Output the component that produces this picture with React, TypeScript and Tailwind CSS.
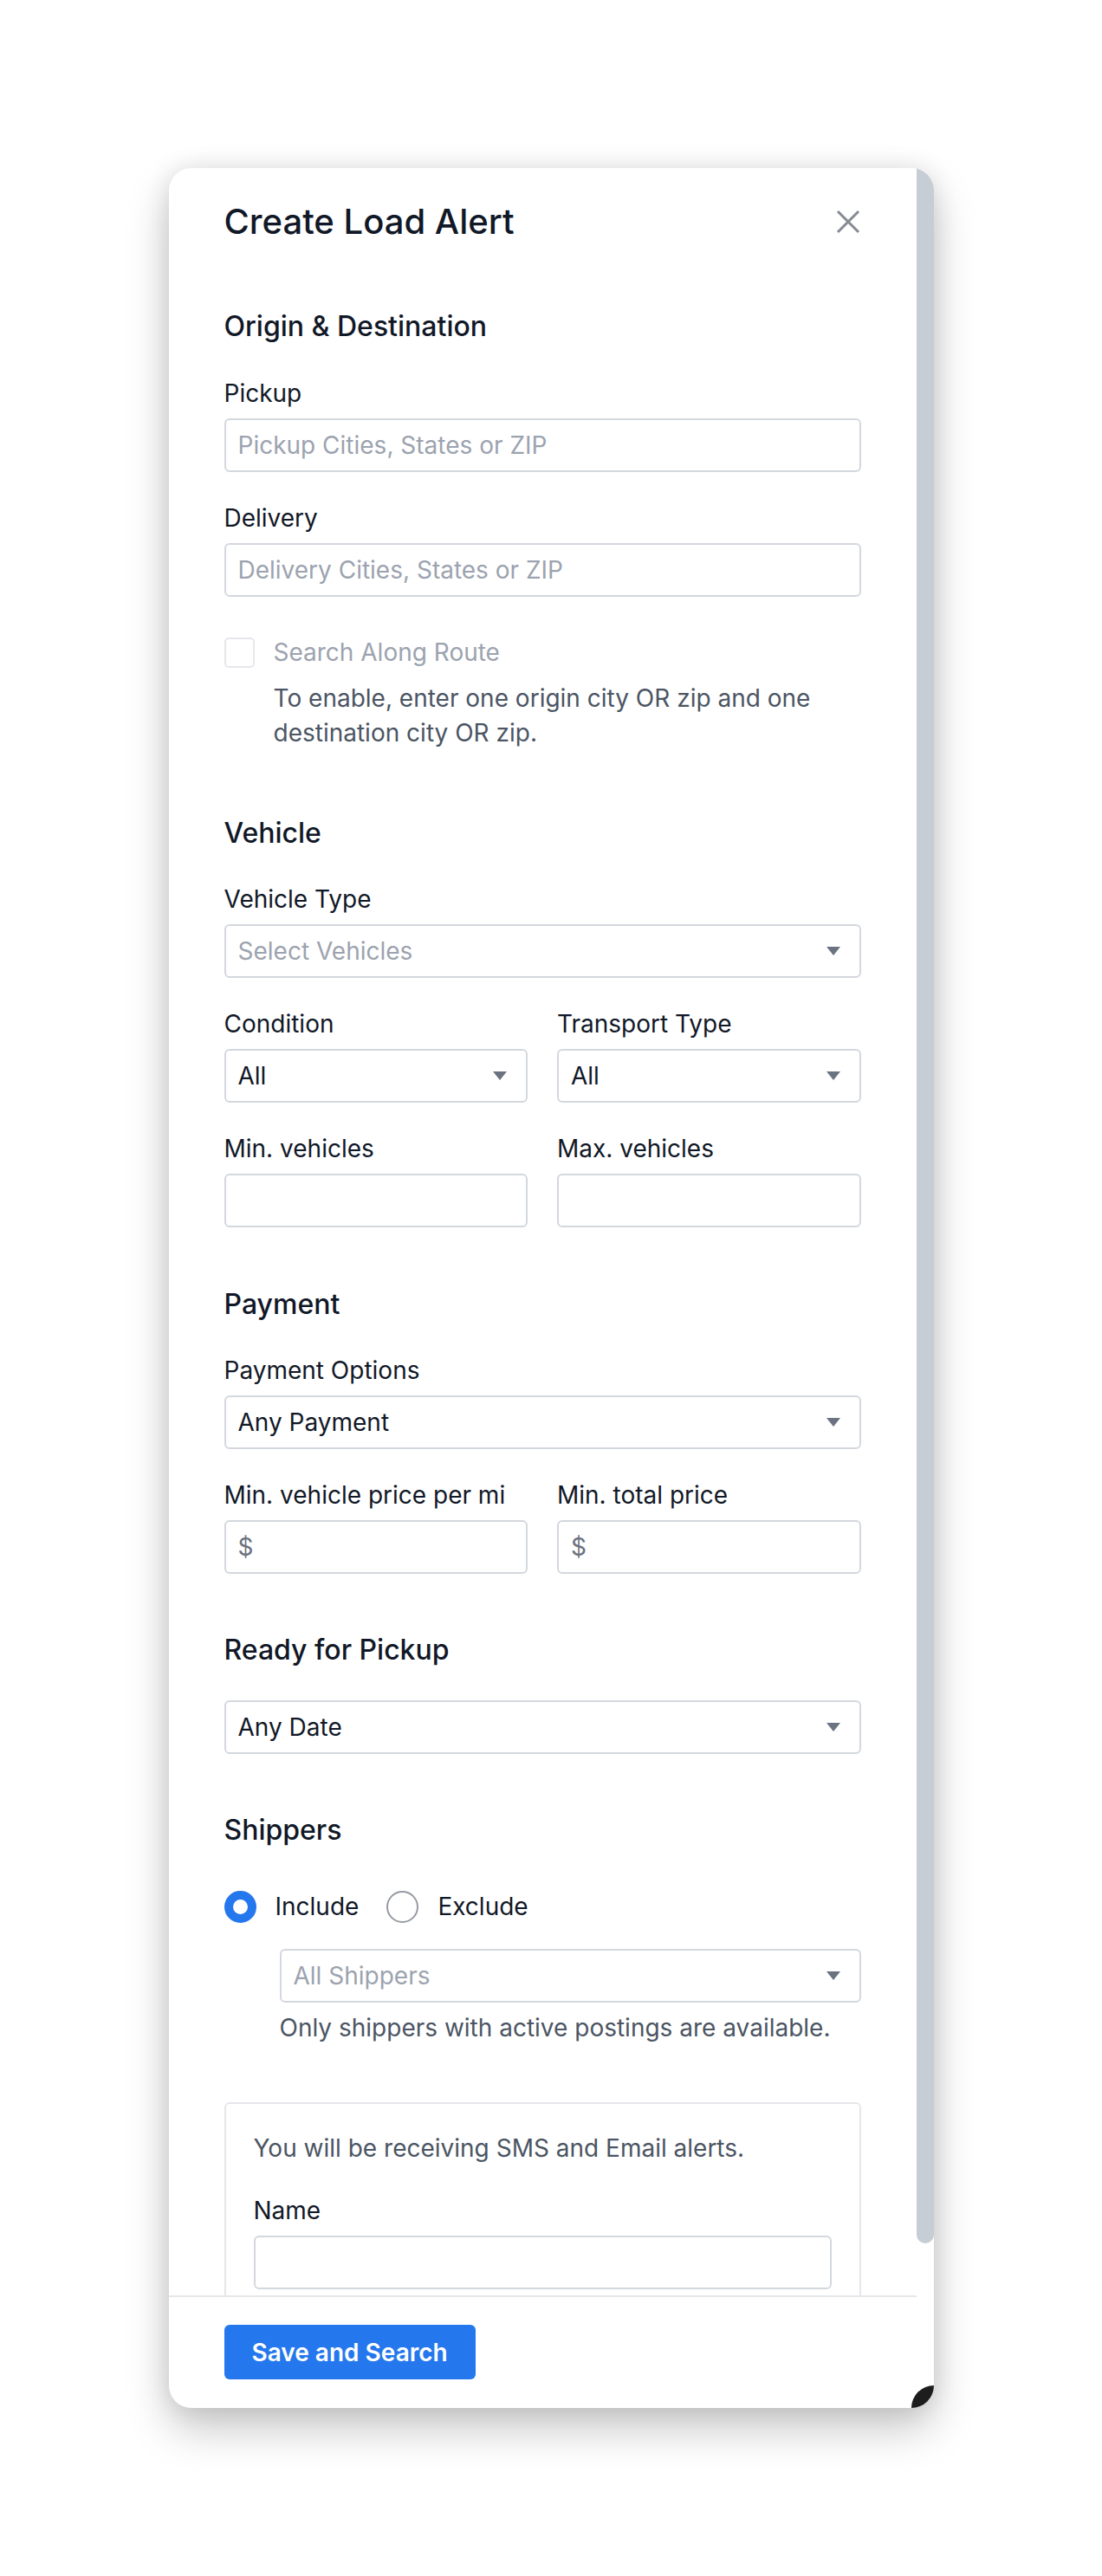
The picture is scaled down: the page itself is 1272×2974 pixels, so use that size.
import React from "react";

const Caret = () => (
  <svg width="16" height="10" viewBox="0 0 16 10" className="shrink-0">
    <path d="M0 0 H16 L8 10 Z" fill="#6b7280" />
  </svg>
);

const Label = ({ children, className = "" }: { children: React.ReactNode; className?: string }) => (
  <div className={`text-[28px] leading-[38px] text-[#111827] whitespace-nowrap ${className}`}>{children}</div>
);

const Heading = ({ children, className = "" }: { children: React.ReactNode; className?: string }) => (
  <div className={`text-[32px] leading-[44px] font-medium text-[#111827] ${className}`}>{children}</div>
);

const Select = ({
  value,
  placeholder = false,
  className = "",
}: {
  value: string;
  placeholder?: boolean;
  className?: string;
}) => (
  <div
    className={`h-[62px] flex items-center justify-between border-2 border-[#d3d7de] rounded-[6px] pl-[14px] pr-[22px] bg-white ${className}`}
  >
    <span className={`text-[28px] leading-[38px] ${placeholder ? "text-[#9ca3af]" : "text-[#111827]"}`}>
      {value}
    </span>
    <Caret />
  </div>
);

const Input = ({ placeholder = "", prefix = "", className = "" }: { placeholder?: string; prefix?: string; className?: string }) => (
  <div
    className={`h-[62px] flex items-center border-2 border-[#d3d7de] rounded-[6px] pl-[14px] pr-[14px] bg-white ${className}`}
  >
    {prefix ? <span className="text-[28px] leading-[38px] text-[#6b7280]">{prefix}</span> : null}
    {placeholder ? <span className="text-[28px] leading-[38px] text-[#9ca3af]">{placeholder}</span> : null}
  </div>
);

export default function App() {
  return (
    <div className="w-full h-[2974px] bg-white flex items-center justify-center font-['Inter',sans-serif]">
      <div className="relative w-[883px] h-[2586px] bg-white rounded-[26px] overflow-hidden flex shadow-[0_24px_50px_rgba(0,0,0,0.22),0_0_28px_rgba(0,0,0,0.10)]">
        {/* main column */}
        <div className="w-[863px] flex flex-col">
          <div className="flex-1 overflow-hidden">
            <div className="px-[64px] pt-[34px]">
              <div className="h-[56px] flex items-center justify-between">
                <div className="text-[40px] leading-[56px] font-medium text-[#111827]">Create Load Alert</div>
                <svg width="28" height="28" viewBox="0 0 28 28" className="mr-[1px]">
                  <path d="M2 2 L26 26 M26 2 L2 26" stroke="#868b93" strokeWidth="3" />
                </svg>
              </div>

              {/* Origin & Destination */}
              <Heading className="mt-[71px]">Origin &amp; Destination</Heading>
              <Label className="mt-[36px]">Pickup</Label>
              <Input className="mt-[10px]" placeholder="Pickup Cities, States or ZIP" />
              <Label className="mt-[34px]">Delivery</Label>
              <Input className="mt-[10px]" placeholder="Delivery Cities, States or ZIP" />

              <div className="mt-[47px] h-[35px] flex items-center">
                <div className="w-[35px] h-[35px] border-2 border-[#e5e7eb] rounded-[5px] shrink-0" />
                <span className="ml-[22px] text-[28px] leading-[35px] text-[#9ca3af]">Search Along Route</span>
              </div>
              <div className="mt-[15px] pl-[57px] text-[28px] leading-[40px] text-[#4b5563] whitespace-nowrap">
                To enable, enter one origin city OR zip and one
                <br />
                destination city OR zip.
              </div>

              {/* Vehicle */}
              <Heading className="mt-[74px]">Vehicle</Heading>
              <Label className="mt-[35px]">Vehicle Type</Label>
              <Select className="mt-[10px]" value="Select Vehicles" placeholder />
              <div className="grid grid-cols-2 gap-x-[34px]">
                <div>
                  <Label className="mt-[34px]">Condition</Label>
                  <Select className="mt-[10px]" value="All" />
                </div>
                <div>
                  <Label className="mt-[34px]">Transport Type</Label>
                  <Select className="mt-[10px]" value="All" />
                </div>
                <div>
                  <Label className="mt-[34px]">Min. vehicles</Label>
                  <Input className="mt-[10px]" />
                </div>
                <div>
                  <Label className="mt-[34px]">Max. vehicles</Label>
                  <Input className="mt-[10px]" />
                </div>
              </div>

              {/* Payment */}
              <Heading className="mt-[67px]">Payment</Heading>
              <Label className="mt-[35px]">Payment Options</Label>
              <Select className="mt-[10px]" value="Any Payment" />
              <div className="grid grid-cols-2 gap-x-[34px]">
                <div>
                  <Label className="mt-[34px]">Min. vehicle price per mi</Label>
                  <Input className="mt-[10px]" prefix="$" />
                </div>
                <div>
                  <Label className="mt-[34px]">Min. total price</Label>
                  <Input className="mt-[10px]" prefix="$" />
                </div>
              </div>

              {/* Ready for Pickup */}
              <Heading className="mt-[66px]">Ready for Pickup</Heading>
              <Select className="mt-[36px]" value="Any Date" />

              {/* Shippers */}
              <Heading className="mt-[66px]">Shippers</Heading>
              <div className="mt-[48px] h-[37px] flex items-center">
                <div className="w-[37px] h-[37px] rounded-full border-[10.5px] border-[#2477ec] bg-white shrink-0" />
                <span className="ml-[22px] text-[28px] leading-[37px] text-[#111827]">Include</span>
                <div className="ml-[32px] w-[37px] h-[37px] rounded-full border-2 border-[#969ba3] bg-white shrink-0" />
                <span className="ml-[22px] text-[28px] leading-[37px] text-[#111827]">Exclude</span>
              </div>
              <div className="ml-[64px]">
                <Select className="mt-[30px]" value="All Shippers" placeholder />
                <div className="mt-[10px] text-[28px] leading-[38px] text-[#4b5563] whitespace-nowrap">
                  Only shippers with active postings are available.
                </div>
              </div>

              {/* Notification box */}
              <div className="mt-[67px] border-2 border-[#e5e7eb] rounded-[6px] px-[32px] pt-[32px] pb-[40px]">
                <div className="text-[28px] leading-[38px] text-[#4b5563]">
                  You will be receiving SMS and Email alerts.
                </div>
                <Label className="mt-[34px]">Name</Label>
                <Input className="mt-[10px]" />
              </div>
            </div>
          </div>

          {/* footer */}
          <div className="h-[130px] shrink-0 border-t-2 border-[#e5e7eb] px-[64px] pt-[32px]">
            <button className="h-[63px] px-[32px] rounded-[6px] bg-[#2477ec] text-white text-[28px] leading-[38px] font-semibold">
              Save and Search
            </button>
          </div>
        </div>

        {/* scrollbar */}
        <div className="w-[20px] shrink-0">
          <div className="w-full h-[2396px] bg-[#c6cdd5] rounded-b-[10px]" />
        </div>

        {/* corner blob */}
        <div className="absolute right-0 bottom-0 w-[26px] h-[26px] rounded-tl-full bg-[#1d1d1d]" />
      </div>
    </div>
  );
}
